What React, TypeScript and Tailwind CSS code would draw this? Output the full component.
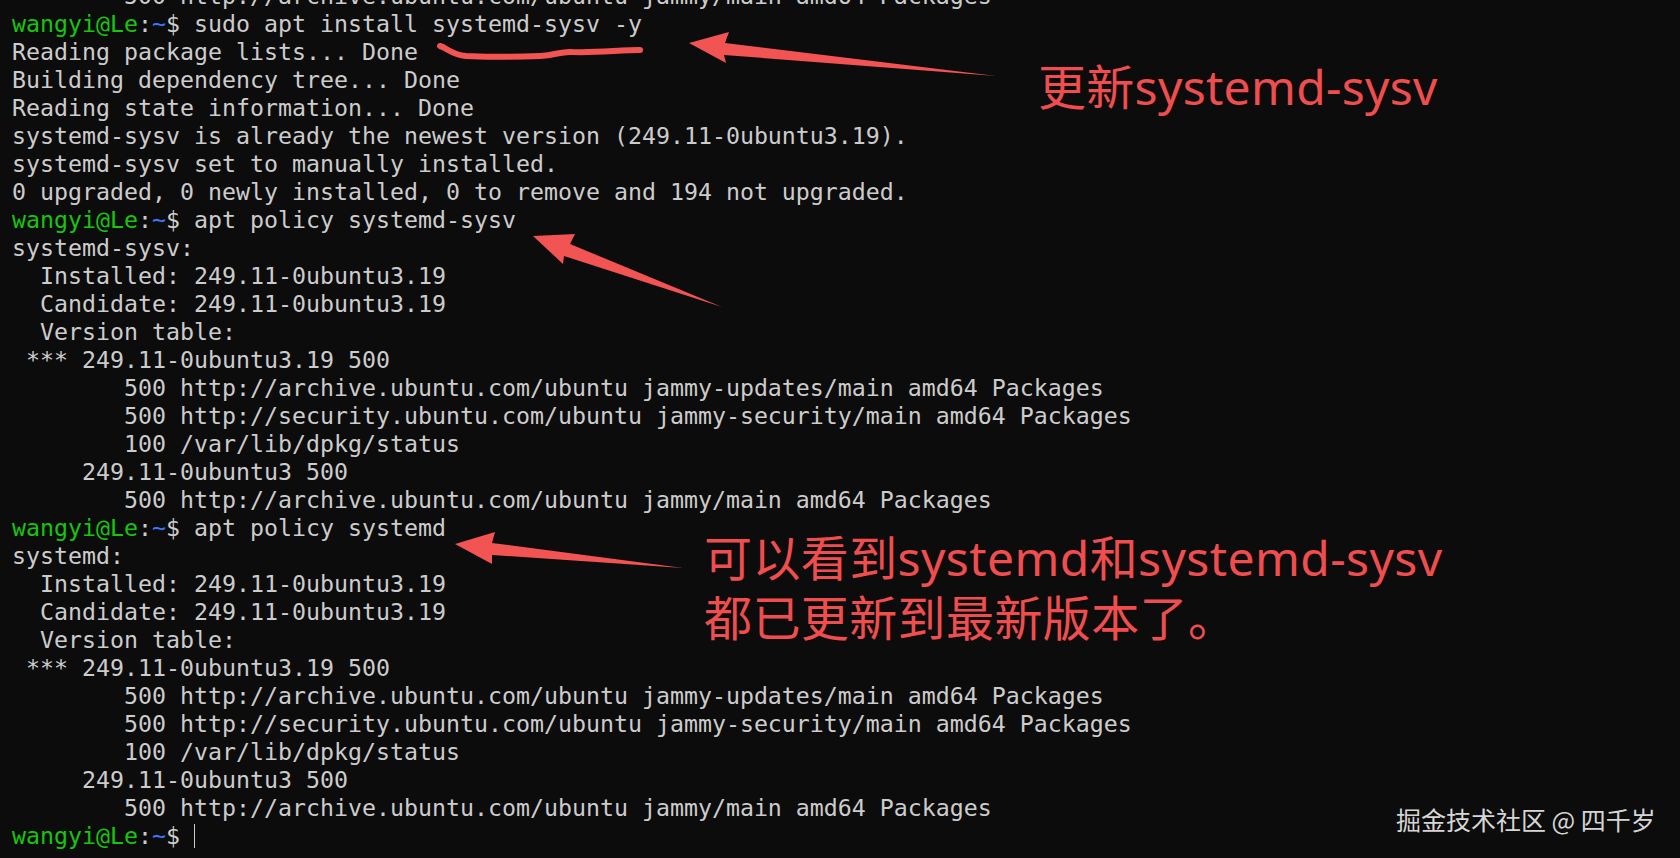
import React from 'react';

type Line = { prompt?: boolean; text: string; cursor?: boolean };

const policyBlock = (pkg: string): Line[] => [
    { text: `${pkg}:` },
    { text: '  Installed: 249.11-0ubuntu3.19' },
    { text: '  Candidate: 249.11-0ubuntu3.19' },
    { text: '  Version table:' },
    { text: ' *** 249.11-0ubuntu3.19 500' },
    { text: '        500 http://archive.ubuntu.com/ubuntu jammy-updates/main amd64 Packages' },
    { text: '        500 http://security.ubuntu.com/ubuntu jammy-security/main amd64 Packages' },
    { text: '        100 /var/lib/dpkg/status' },
    { text: '     249.11-0ubuntu3 500' },
    { text: '        500 http://archive.ubuntu.com/ubuntu jammy/main amd64 Packages' },
];

const lines: Line[] = [
    { text: '        500 http://archive.ubuntu.com/ubuntu jammy/main amd64 Packages' },
    { prompt: true, text: ' sudo apt install systemd-sysv -y' },
    { text: 'Reading package lists... Done' },
    { text: 'Building dependency tree... Done' },
    { text: 'Reading state information... Done' },
    { text: 'systemd-sysv is already the newest version (249.11-0ubuntu3.19).' },
    { text: 'systemd-sysv set to manually installed.' },
    { text: '0 upgraded, 0 newly installed, 0 to remove and 194 not upgraded.' },
    { prompt: true, text: ' apt policy systemd-sysv' },
    ...policyBlock('systemd-sysv'),
    { prompt: true, text: ' apt policy systemd' },
    ...policyBlock('systemd'),
    { prompt: true, text: ' ', cursor: true },
];

const Prompt = () => (
    <>
        <span className="text-[#16c60c]">wangyi@Le</span>
        <span>:</span>
        <span className="text-[#3b78ff]">~</span>
        <span>$</span>
    </>
);

// red arrows + squiggle drawn on top of the terminal
const Annotations = () => (
    <svg className="absolute inset-0 pointer-events-none" width="1680" height="858" viewBox="0 0 1680 858">
        <g fill="#f25353">
            <polygon points="689,43 729,32 725,43 996,76 724,55 726,63" />
            <polygon points="533,236 575,234 570,244 722,307 564,256 563,264" />
            <polygon points="455,544 495,532 492,543 683,568 492,555 492,564" />
        </g>
        <path
            d="M440,46 C447,48 452,55 466,56 C490,57 520,57 540,56 C556,55 562,51 572,52 C596,53 620,50 640,50"
            fill="none"
            stroke="#f25353"
            strokeWidth="6"
            strokeLinecap="round"
        />
    </svg>
);

export default function App() {
    return (
        <div className="relative w-[1680px] h-[858px] overflow-hidden bg-[#0c0c0c]">
            <div className="-mt-[18px] pl-[12px] font-['DejaVu_Sans_Mono',monospace] text-[23.25px] leading-[28px] text-[#cccccc] whitespace-pre">
                {lines.map((line, i) => (
                    <div key={i} className="h-[28px] flex items-center">
                        {line.prompt && <Prompt />}
                        <span>{line.text}</span>
                        {line.cursor && <span className="inline-block w-[1px] h-[24px] bg-[#cccccc]" />}
                    </div>
                ))}
            </div>

            <Annotations />

            <div className="absolute left-[1038px] top-[57px] font-['Noto_Sans','Noto_Sans_CJK_SC',sans-serif] text-[48px] leading-[60px] tracking-[0.3px] text-[#f04e4e]">
                更新systemd-sysv
            </div>
            <div className="absolute left-[704px] top-[528px] font-['Noto_Sans','Noto_Sans_CJK_SC',sans-serif] text-[48px] leading-[60px] tracking-[0.4px] text-[#f04e4e]">
                <div>可以看到systemd和systemd-sysv</div>
                <div>都已更新到最新版本了。</div>
            </div>

            <div className="absolute left-[1396px] top-[803px] font-['Noto_Sans_CJK_SC',sans-serif] text-[25px] leading-[32px] text-[#d6d6d6]">
                掘金技术社区 @ 四千岁
            </div>
        </div>
    );
}
